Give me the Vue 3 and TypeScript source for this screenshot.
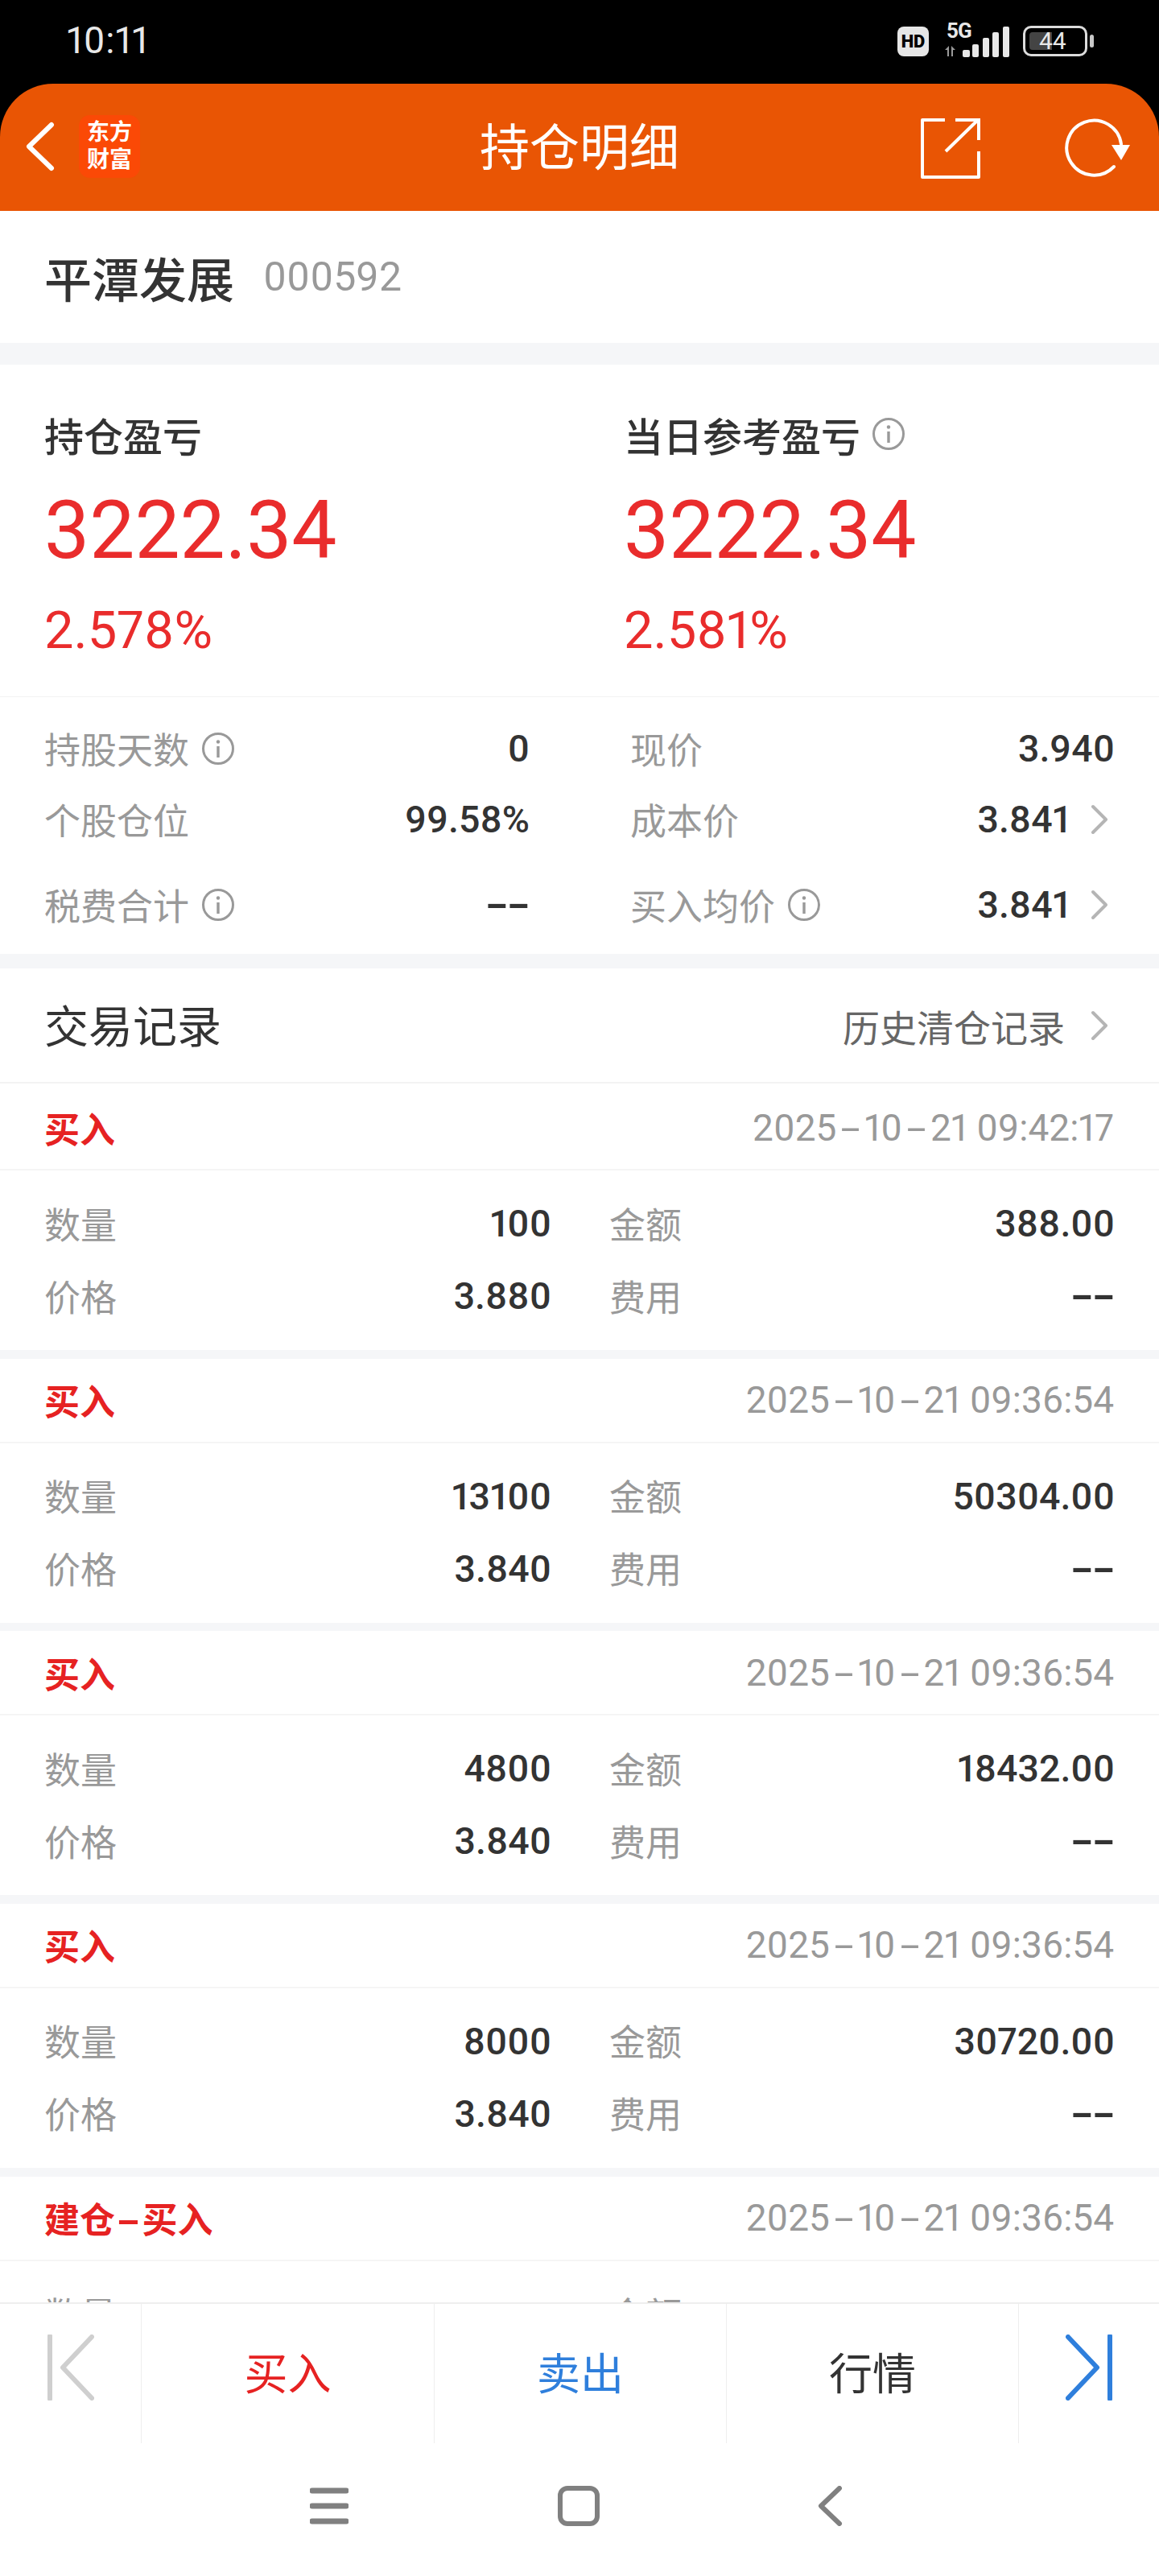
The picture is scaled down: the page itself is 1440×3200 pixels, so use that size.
<script setup lang="ts">
interface Stat {
  label: string
  value: string
  info?: boolean
  arrow?: boolean
}

interface Trade {
  tag: string
  time: string
  qty: string
  amount: string
  price: string
}

const leftStats: Stat[] = [
  { label: '持股天数', value: '0', info: true },
  { label: '个股仓位', value: '99.58%' },
  { label: '税费合计', value: '--', info: true },
]

const rightStats: Stat[] = [
  { label: '现价', value: '3.940' },
  { label: '成本价', value: '3.841', arrow: true },
  { label: '买入均价', value: '3.841', info: true, arrow: true },
]

const trades: Trade[] = [
  { tag: '买入', time: '2025-10-21 09:42:17', qty: '100', amount: '388.00', price: '3.880' },
  { tag: '买入', time: '2025-10-21 09:36:54', qty: '13100', amount: '50304.00', price: '3.840' },
  { tag: '买入', time: '2025-10-21 09:36:54', qty: '4800', amount: '18432.00', price: '3.840' },
  { tag: '买入', time: '2025-10-21 09:36:54', qty: '8000', amount: '30720.00', price: '3.840' },
  { tag: '建仓-买入', time: '2025-10-21 09:36:54', qty: '', amount: '', price: '' },
]

// the app's font has a much wider hyphen, so hyphens get their own span
function pieces(text: string): string[] {
  return text.split(/(-)/).filter((p) => p !== '')
}
</script>

<template>
  <div class="page">
    <div class="top">
      <div class="status">
        <span class="clock">10:11</span>
        <div class="status-icons">
          <span class="hd">HD</span>
          <div class="signal">
            <span class="net">5G</span>
            <svg class="bars" width="84" height="41" viewBox="0 0 84 41">
              <path d="M1 31l5-5v13h-2v-8zM9 39V26l5 5h-3v8z" fill="#9a9a9a" />
              <rect x="23" y="31" width="9" height="9" rx="2" fill="#e8e8e8" />
              <rect x="35" y="24" width="8" height="16" rx="2" fill="#e8e8e8" />
              <rect x="48" y="16" width="8" height="24" rx="2" fill="#e8e8e8" />
              <rect x="60" y="9" width="8" height="31" rx="2" fill="#e8e8e8" />
              <rect x="73" y="2" width="8" height="38" rx="2" fill="#e8e8e8" />
            </svg>
          </div>
          <div class="battery">
            <span class="battery-fill"></span>
            <span class="battery-text">44</span>
          </div>
          <span class="battery-nub"></span>
        </div>
      </div>
      <header class="nav">
        <div class="nav-left">
          <svg class="back" width="38" height="62" viewBox="0 0 38 62">
            <path d="M33 4L5 31l28 27" fill="none" stroke="#fff" stroke-width="6" stroke-linecap="round" stroke-linejoin="round" />
          </svg>
          <div class="logo">东方<br />财富</div>
        </div>
        <h1 class="title">持仓明细</h1>
        <div class="nav-right">
          <svg width="74" height="76" viewBox="0 0 74 76">
            <path d="M30 3H2v71h70V42" fill="none" stroke="#fff" stroke-width="4" stroke-linejoin="round" />
            <path d="M31 42L71 3M43 3h29v25" fill="none" stroke="#fff" stroke-width="4" />
          </svg>
          <svg width="84" height="76" viewBox="0 0 84 76">
            <path d="M63 61A34 34 0 1 1 72 33" fill="none" stroke="#fff" stroke-width="4" stroke-linecap="round" />
            <path d="M60 34H83L72 53z" fill="#fff" />
          </svg>
        </div>
      </header>
    </div>

    <main class="content">
      <section class="stock">
        <span class="stock-name">平潭发展</span>
        <span class="stock-code">000592</span>
      </section>

      <section class="pnl">
        <div class="pnl-col">
          <div class="pnl-label">持仓盈亏</div>
          <div class="pnl-value">3222.34</div>
          <div class="pnl-rate">2.578%</div>
        </div>
        <div class="pnl-col">
          <div class="pnl-label">
            当日参考盈亏
            <svg class="info" width="42" height="42" viewBox="0 0 42 42">
              <circle cx="21" cy="21" r="18.5" fill="none" stroke="#999" stroke-width="3" />
              <circle cx="21" cy="12.5" r="2.2" fill="#999" />
              <path d="M21 18v14" stroke="#999" stroke-width="3.4" />
            </svg>
          </div>
          <div class="pnl-value">3222.34</div>
          <div class="pnl-rate">2.581%</div>
        </div>
      </section>

      <section class="stats">
        <div class="stats-col stats-col-left">
          <div v-for="s in leftStats" :key="s.label" class="stat-row">
            <span class="stat-label">{{ s.label }}</span>
            <svg v-if="s.info" class="info" width="42" height="42" viewBox="0 0 42 42">
              <circle cx="21" cy="21" r="18.5" fill="none" stroke="#999" stroke-width="3" />
              <circle cx="21" cy="12.5" r="2.2" fill="#999" />
              <path d="M21 18v14" stroke="#999" stroke-width="3.4" />
            </svg>
            <span class="stat-value"><span v-for="(p, k) in pieces(s.value)" :key="k" :class="{ dash: p === '-' }">{{ p }}</span></span>
          </div>
        </div>
        <div class="stats-col">
          <div v-for="s in rightStats" :key="s.label" class="stat-row">
            <span class="stat-label">{{ s.label }}</span>
            <svg v-if="s.info" class="info" width="42" height="42" viewBox="0 0 42 42">
              <circle cx="21" cy="21" r="18.5" fill="none" stroke="#999" stroke-width="3" />
              <circle cx="21" cy="12.5" r="2.2" fill="#999" />
              <path d="M21 18v14" stroke="#999" stroke-width="3.4" />
            </svg>
            <span class="stat-value">{{ s.value }}</span>
            <svg v-if="s.arrow" class="chev" width="22" height="38" viewBox="0 0 22 38">
              <path d="M3 3l16 16L3 35" fill="none" stroke="#b5b5b5" stroke-width="4" stroke-linecap="round" stroke-linejoin="round" />
            </svg>
          </div>
        </div>
      </section>

      <section class="records-head">
        <span class="records-title">交易记录</span>
        <span class="records-link">历史清仓记录</span>
        <svg class="chev" width="22" height="38" viewBox="0 0 22 38">
          <path d="M3 3l16 16L3 35" fill="none" stroke="#b5b5b5" stroke-width="4" stroke-linecap="round" stroke-linejoin="round" />
        </svg>
      </section>

      <article v-for="(t, i) in trades" :key="i" class="trade">
        <div class="trade-head">
          <span class="trade-tag"><span v-for="(p, k) in pieces(t.tag)" :key="k" :class="{ dash: p === '-' }">{{ p }}</span></span>
          <span class="trade-time"><span v-for="(p, k) in pieces(t.time)" :key="k" :class="{ dash: p === '-' }">{{ p }}</span></span>
        </div>
        <div class="trade-body">
          <div class="cell">
            <span class="stat-label">数量</span>
            <span class="stat-value">{{ t.qty }}</span>
          </div>
          <div class="cell">
            <span class="stat-label">金额</span>
            <span class="stat-value">{{ t.amount }}</span>
          </div>
          <div class="cell">
            <span class="stat-label">价格</span>
            <span class="stat-value">{{ t.price }}</span>
          </div>
          <div class="cell">
            <span class="stat-label">费用</span>
            <span class="stat-value"><span class="dash">-</span><span class="dash">-</span></span>
          </div>
        </div>
      </article>
    </main>

    <footer class="actions">
      <div class="action action-side">
        <svg width="58" height="82" viewBox="0 0 58 82">
          <path d="M3 2v78" stroke="#cfcfcf" stroke-width="6" stroke-linecap="round" />
          <path d="M55 3L19 41l36 38" fill="none" stroke="#cfcfcf" stroke-width="6" stroke-linecap="round" stroke-linejoin="round" />
        </svg>
      </div>
      <div class="action buy">买入</div>
      <div class="action sell">卖出</div>
      <div class="action quote">行情</div>
      <div class="action action-side">
        <svg width="58" height="82" viewBox="0 0 58 82">
          <path d="M55 2v78" stroke="#2f7fdc" stroke-width="6" stroke-linecap="round" />
          <path d="M3 3l36 38L3 79" fill="none" stroke="#2f7fdc" stroke-width="6" stroke-linecap="round" stroke-linejoin="round" />
        </svg>
      </div>
    </footer>

    <nav class="sysnav">
      <svg width="48" height="46" viewBox="0 0 48 46">
        <path d="M3 4h42M3 23h42M3 42h42" stroke="#808080" stroke-width="7" stroke-linecap="round" />
      </svg>
      <svg class="sys-home" width="52" height="50" viewBox="0 0 52 50">
        <rect x="3" y="3" width="46" height="44" rx="9" fill="none" stroke="#808080" stroke-width="6" />
      </svg>
      <svg width="32" height="50" viewBox="0 0 32 50">
        <path d="M28 3L5 25l23 22" fill="none" stroke="#808080" stroke-width="6" stroke-linecap="round" stroke-linejoin="round" />
      </svg>
    </nav>
  </div>
</template>

<style scoped>
.page {
  width: 1440px;
  height: 3200px;
  display: flex;
  flex-direction: column;
  background: #fff;
  font-family: Roboto, 'Noto Sans CJK SC', sans-serif;
  font-variant-numeric: proportional-nums;
  overflow: hidden;
}

.top {
  background: #000;
}

.status {
  height: 104px;
  display: flex;
  align-items: center;
  justify-content: space-between;
  padding: 0 81px 0 83px;
  box-sizing: border-box;
}

.clock {
  color: #e8e8e8;
  font-size: 46px;
  line-height: 1;
  margin-top: -4px;
  letter-spacing: 0.8px;
}

.status-icons {
  display: flex;
  align-items: center;
  margin-top: -2px;
}

.hd {
  width: 39px;
  height: 37px;
  border-radius: 8px;
  background: #e6e6e6;
  color: #000;
  font-size: 22px;
  font-weight: 900;
  line-height: 37px;
  text-align: center;
}

.signal {
  position: relative;
  width: 84px;
  height: 41px;
  margin-left: 19px;
}

.net {
  position: absolute;
  left: 3px;
  top: -7px;
  color: #e8e8e8;
  font-size: 26px;
  font-weight: 700;
  line-height: 28px;
  letter-spacing: -1px;
}

.bars {
  position: absolute;
  left: 0;
  top: 0;
}

.battery {
  position: relative;
  width: 80px;
  height: 38px;
  margin-left: 14px;
  border: 3px solid #dcdcdc;
  border-radius: 10px;
  box-sizing: border-box;
}

.battery-fill {
  position: absolute;
  left: 5px;
  top: 5px;
  width: 28px;
  height: 22px;
  border-radius: 4px 0 0 4px;
  background: #444;
}

.battery-text {
  position: absolute;
  left: 17px;
  top: 0;
  color: #e8e8e8;
  font-size: 30px;
  line-height: 32px;
}

.battery-nub {
  width: 5px;
  height: 16px;
  margin-left: 3px;
  border-radius: 3px;
  background: #c8c8c8;
}

.nav {
  height: 158px;
  display: grid;
  grid-template-columns: 1fr auto 1fr;
  align-items: start;
  background: #e95504;
  border-radius: 66px 66px 0 0;
}

.nav-left {
  display: flex;
  align-items: center;
  padding: 39px 0 0 31px;
}

.logo {
  width: 76px;
  height: 78px;
  margin-left: 29px;
  border-radius: 14px;
  background: #fb4906;
  color: #fff;
  font-size: 28px;
  font-weight: 700;
  line-height: 34px;
  text-align: center;
  padding-top: 5px;
  box-sizing: border-box;
}

.title {
  margin: 46px 0 0;
  color: #fff;
  font-size: 62px;
  font-weight: 400;
  line-height: 70px;
}

.nav-right {
  display: flex;
  justify-content: flex-end;
  gap: 103px;
  padding: 42px 35px 0 0;
}

.content {
  flex: 1;
  min-height: 0;
  overflow: hidden;
  background: #f5f6f8;
}

.stock {
  height: 164px;
  display: flex;
  align-items: center;
  padding-left: 55px;
  background: #fff;
}

.stock-name {
  color: #333;
  font-size: 59px;
  font-weight: 500;
}

.stock-code {
  margin-left: 36px;
  color: #999;
  font-size: 50px;
}

.pnl {
  height: 413px;
  margin-top: 27px;
  display: flex;
  padding-left: 55px;
  background: #fff;
  border-bottom: 1px solid #f3f3f3;
  box-sizing: border-box;
}

.pnl-col {
  flex: none;
  width: 720px;
}

.pnl-label {
  display: flex;
  align-items: center;
  height: 60px;
  margin-top: 56px;
  color: #333;
  font-size: 49px;
  font-weight: 500;
}

.pnl-label .info {
  margin-left: 14px;
}

.pnl-value {
  margin-top: 30px;
  color: #e92c2c;
  font-size: 100px;
  line-height: 120px;
}

.pnl-rate {
  margin-top: 24px;
  color: #e92c2c;
  font-size: 65px;
  line-height: 80px;
}

.stats {
  height: 319px;
  display: grid;
  grid-template-columns: 603px 602px;
  column-gap: 125px;
  padding: 20px 0 0 55px;
  background: #fff;
  box-sizing: border-box;
}

.stat-row {
  height: 88px;
  display: flex;
  align-items: center;
}

.stat-row:last-child {
  margin-top: 18px;
}

.stat-label {
  margin-top: -2px;
  color: #999;
  font-size: 45px;
}

.stat-row .info {
  margin-left: 15px;
}

.stat-value {
  margin-left: auto;
  color: #333;
  font-size: 46.5px;
  font-weight: 500;
}

.dash {
  display: inline-block;
  width: 0.76em;
  text-align: center;
  transform: scaleX(1.9);
}

.stat-value .dash {
  width: 0.58em;
  font-weight: 700;
  transform: scaleX(1.7);
}

.chev {
  flex: none;
  margin: 0 8px 0 26px;
}

.records-head {
  height: 141px;
  margin-top: 18px;
  display: flex;
  align-items: center;
  padding: 0 57px 0 55px;
  background: #fff;
  border-bottom: 2px solid #f3f3f3;
}

.records-title {
  margin-top: -5px;
  color: #333;
  font-size: 55px;
}

.records-link {
  margin-left: auto;
  color: #666;
  font-size: 46px;
}

.records-head .chev {
  margin: 0 6px 0 32px;
}

.trade {
  height: 328px;
  margin-bottom: 10.67px;
  background: #fff;
}

.trade:first-of-type {
  height: 331px;
  border-top: 3px solid #fff;
  box-sizing: border-box;
}

.trade-head {
  height: 105px;
  display: flex;
  align-items: center;
  justify-content: space-between;
  padding: 0 56px 0 55px;
  border-bottom: 2px solid #f5f5f5;
  box-sizing: border-box;
}

.trade-tag {
  color: #e62222;
  font-size: 44px;
  font-weight: 700;
}

.trade-time {
  color: #999;
  font-size: 46px;
}

.trade-body {
  display: grid;
  grid-template-columns: 630px 628px;
  column-gap: 72px;
  grid-auto-rows: 90px;
  padding: 21px 0 0 55px;
}

.cell {
  display: flex;
  align-items: center;
}

.actions {
  height: 175px;
  flex: none;
  display: grid;
  grid-template-columns: 175px 364px 363px 363px 175px;
  border-top: 2px solid #eee;
  background: #fff;
  box-sizing: border-box;
}

.action {
  display: flex;
  align-items: center;
  justify-content: center;
  font-size: 54px;
  border-left: 1px solid #eee;
  padding-bottom: 6px;
}

.action:first-child {
  border-left: none;
}

.buy {
  color: #e62222;
}

.sell {
  color: #2f7fdc;
}

.quote {
  color: #333;
}

.action-side {
  padding-bottom: 16px;
}

.sysnav {
  height: 165px;
  flex: none;
  display: flex;
  align-items: center;
  justify-content: center;
  padding: 0 9px 9px 0;
  background: #fff;
  box-sizing: border-box;
}

.sys-home {
  margin: 0 270px 0 260px;
}
</style>
